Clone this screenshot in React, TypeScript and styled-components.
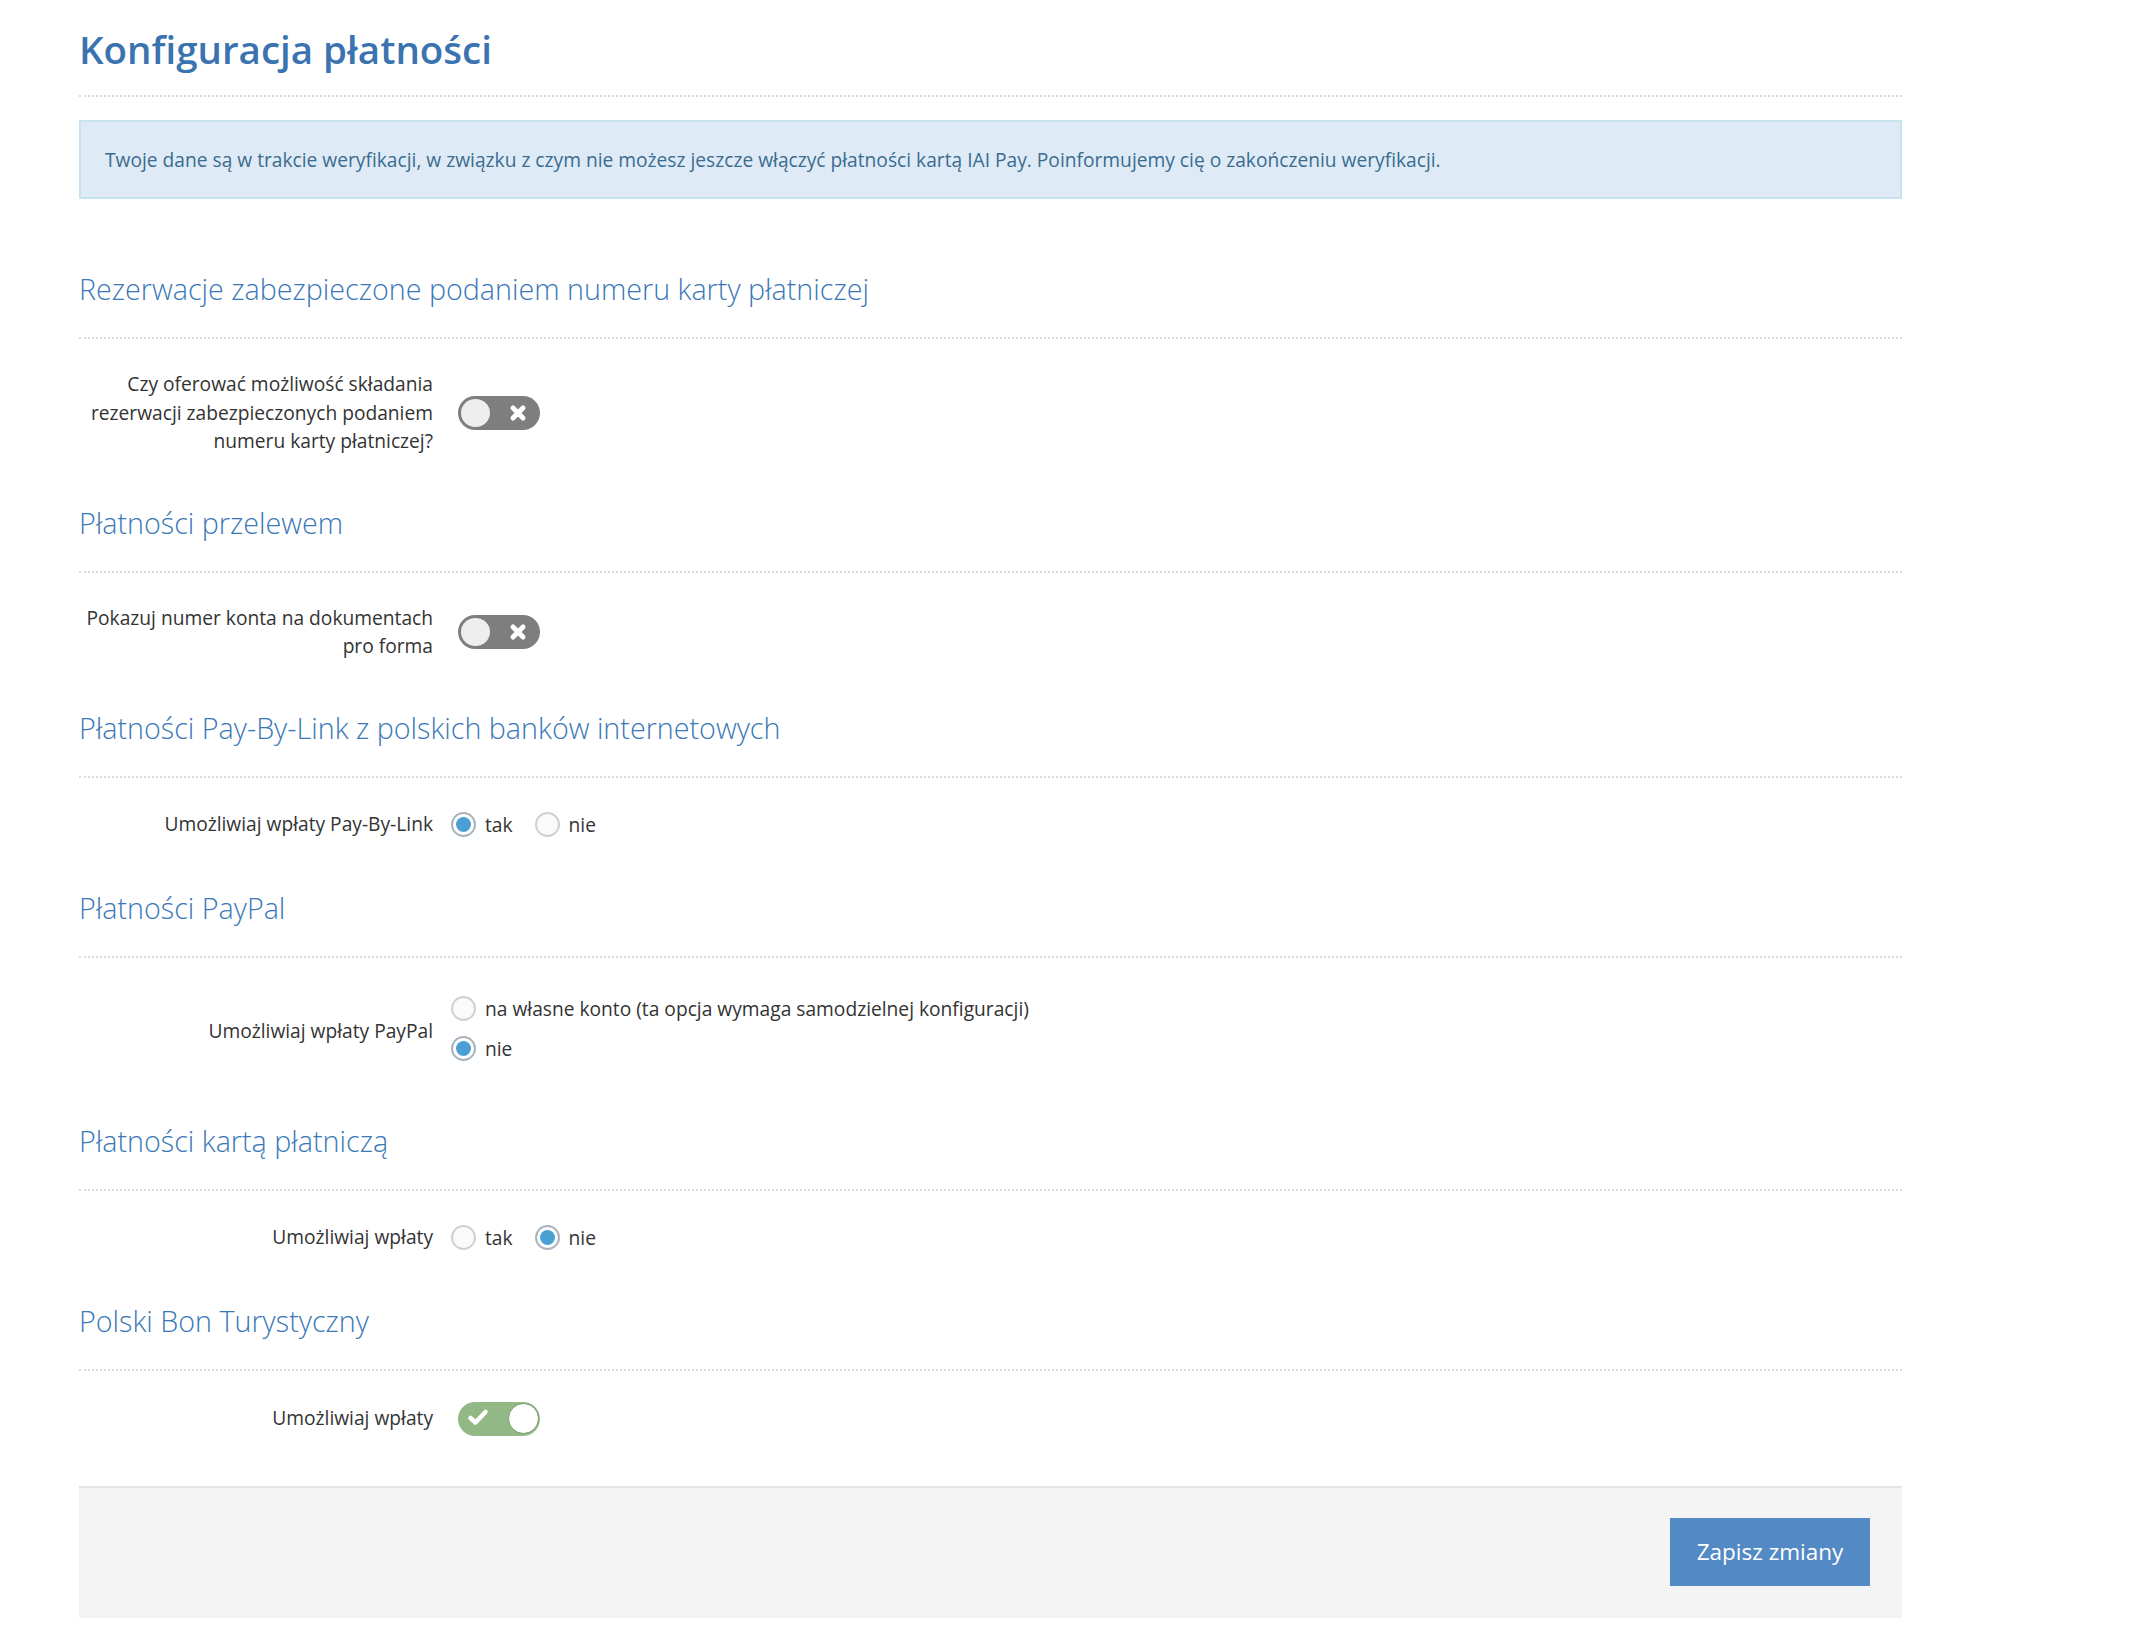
import React from "react";
import styled, { createGlobalStyle } from "styled-components";

const GlobalStyle = createGlobalStyle`
  html, body { margin: 0; padding: 0; background: #ffffff; }
  body {
    font-family: "Open Sans", "Noto Sans", "Liberation Sans", sans-serif;
    color: #333333;
    -webkit-font-smoothing: antialiased;
  }
  * { box-sizing: border-box; }
`;

const Page = styled.div`
  width: 2152px;
  padding: 0 250px 30px 79px;
`;

const Title = styled.h1`
  margin: 0;
  padding: 28px 0 24px;
  font-size: 38.5px;
  line-height: 43px;
  font-weight: 600;
  color: #3a73af;
  border-bottom: 2px dotted #dadada;
`;

const Alert = styled.div`
  margin: 23px 0 43px;
  padding: 24px 24px;
  background: #deebf6;
  border: 2px solid #c5e4ef;
  color: #3b6b8f;
  font-size: 19.2px;
  line-height: 27px;
`;

const SectionTitle = styled.h2`
  margin: 0;
  padding: 27px 0 28px;
  font-size: 28.7px;
  line-height: 40px;
  font-weight: 300;
  color: #3a78b7;
  border-bottom: 2px dotted #dadada;
`;

const Row = styled.div`
  display: grid;
  grid-template-columns: 354px 1fr;
  column-gap: 18px;
  align-items: center;
  padding: 31px 0 20px;
`;

const Label = styled.div`
  text-align: right;
  font-size: 19.2px;
  line-height: 28.5px;
  color: #333333;
  white-space: nowrap;
`;

const Controls = styled.div<{ $stacked?: boolean }>`
  display: flex;
  flex-direction: ${(p) => (p.$stacked ? "column" : "row")};
  align-items: ${(p) => (p.$stacked ? "flex-start" : "center")};
  gap: ${(p) => (p.$stacked ? "0" : "22px")};
  padding-bottom: ${(p) => (p.$stacked ? "5px" : "0")};
  min-height: 32px;
`;

const Option = styled.label<{ $tall?: boolean }>`
  display: inline-flex;
  align-items: center;
  gap: 9px;
  height: ${(p) => (p.$tall ? "40px" : "32px")};
  font-size: 19.2px;
  color: #333333;
  cursor: pointer;
`;

const RadioDot = styled.span<{ $checked?: boolean }>`
  width: 25px;
  height: 25px;
  border-radius: 50%;
  flex: none;
  background: ${(p) => (p.$checked ? "#ffffff" : "#fafafa")};
  border: 2px solid ${(p) => (p.$checked ? "#a8b3be" : "#d0d0d0")};
  display: inline-flex;
  align-items: center;
  justify-content: center;
  &::after {
    content: "";
    display: ${(p) => (p.$checked ? "block" : "none")};
    width: 15px;
    height: 15px;
    border-radius: 50%;
    background: #4aa0d2;
  }
`;

const Toggle = styled.span<{ $on?: boolean }>`
  position: relative;
  display: inline-flex;
  align-items: center;
  width: 82px;
  height: 34px;
  margin-left: 7px;
  border-radius: 17px;
  background: ${(p) => (p.$on ? "#92b885" : "#7e7e7e")};
  cursor: pointer;
`;

const Knob = styled.span<{ $on?: boolean }>`
  position: absolute;
  top: ${(p) => (p.$on ? "1.5px" : "3px")};
  left: ${(p) => (p.$on ? "50px" : "3px")};
  width: ${(p) => (p.$on ? "31px" : "29px")};
  height: ${(p) => (p.$on ? "31px" : "28px")};
  border-radius: 50%;
  background: ${(p) => (p.$on ? "#ffffff" : "#eeeeee")};
  border: ${(p) => (p.$on ? "1.5px solid #7a9a6f" : "none")};
`;

const ToggleIcon = styled.svg<{ $on?: boolean }>`
  position: absolute;
  top: ${(p) => (p.$on ? "6px" : "8px")};
  left: ${(p) => (p.$on ? "9px" : "51px")};
  width: ${(p) => (p.$on ? "22px" : "18px")};
  height: ${(p) => (p.$on ? "19px" : "18px")};
`;

const Footer = styled.div`
  margin-top: 30px;
  padding: 30px 32px 32px;
  background: #f4f4f4;
  border-top: 2px solid #e4e4e4;
  display: flex;
  justify-content: flex-end;
`;

const SaveButton = styled.button`
  width: 200px;
  height: 68px;
  border: none;
  background: #5389c4;
  color: #ffffff;
  font-family: "Open Sans", "Noto Sans", sans-serif;
  font-size: 22.5px;
  cursor: pointer;
`;

function Switch({ on }: { on?: boolean }) {
  return (
    <Toggle $on={on}>
      {on ? (
        <ToggleIcon $on viewBox="0 0 22 19">
          <path d="M3.5 10 L8.5 14.5 L18.5 4" fill="none" stroke="#ffffff" strokeWidth="4.5" strokeLinecap="round" strokeLinejoin="round" />
        </ToggleIcon>
      ) : (
        <ToggleIcon viewBox="0 0 18 18">
          <path d="M4 4 L14 14 M14 4 L4 14" fill="none" stroke="#ffffff" strokeWidth="5" strokeLinecap="round" />
        </ToggleIcon>
      )}
      <Knob $on={on} />
    </Toggle>
  );
}

function Radio({ checked, children, tall }: { checked?: boolean; children: React.ReactNode; tall?: boolean }) {
  return (
    <Option $tall={tall}>
      <RadioDot $checked={checked} />
      <span>{children}</span>
    </Option>
  );
}

export default function App() {
  return (
    <>
      <GlobalStyle />
      <Page>
        <Title>Konfiguracja płatności</Title>
        <Alert>
          Twoje dane są w trakcie weryfikacji, w związku z czym nie możesz jeszcze włączyć płatności kartą IAI Pay. Poinformujemy cię o zakończeniu weryfikacji.
        </Alert>

        <SectionTitle>Rezerwacje zabezpieczone podaniem numeru karty płatniczej</SectionTitle>
        <Row>
          <Label>
            Czy oferować możliwość składania
            <br />
            rezerwacji zabezpieczonych podaniem
            <br />
            numeru karty płatniczej?
          </Label>
          <Controls>
            <Switch />
          </Controls>
        </Row>

        <SectionTitle>Płatności przelewem</SectionTitle>
        <Row>
          <Label>
            Pokazuj numer konta na dokumentach
            <br />
            pro forma
          </Label>
          <Controls>
            <Switch />
          </Controls>
        </Row>

        <SectionTitle>Płatności Pay-By-Link z polskich banków internetowych</SectionTitle>
        <Row>
          <Label>Umożliwiaj wpłaty Pay-By-Link</Label>
          <Controls>
            <Radio checked>tak</Radio>
            <Radio>nie</Radio>
          </Controls>
        </Row>

        <SectionTitle>Płatności PayPal</SectionTitle>
        <Row>
          <Label>Umożliwiaj wpłaty PayPal</Label>
          <Controls $stacked>
            <Radio tall>na własne konto (ta opcja wymaga samodzielnej konfiguracji)</Radio>
            <Radio tall checked>nie</Radio>
          </Controls>
        </Row>

        <SectionTitle>Płatności kartą płatniczą</SectionTitle>
        <Row>
          <Label>Umożliwiaj wpłaty</Label>
          <Controls>
            <Radio>tak</Radio>
            <Radio checked>nie</Radio>
          </Controls>
        </Row>

        <SectionTitle>Polski Bon Turystyczny</SectionTitle>
        <Row>
          <Label>Umożliwiaj wpłaty</Label>
          <Controls>
            <Switch on />
          </Controls>
        </Row>

        <Footer>
          <SaveButton type="button">Zapisz zmiany</SaveButton>
        </Footer>
      </Page>
    </>
  );
}
